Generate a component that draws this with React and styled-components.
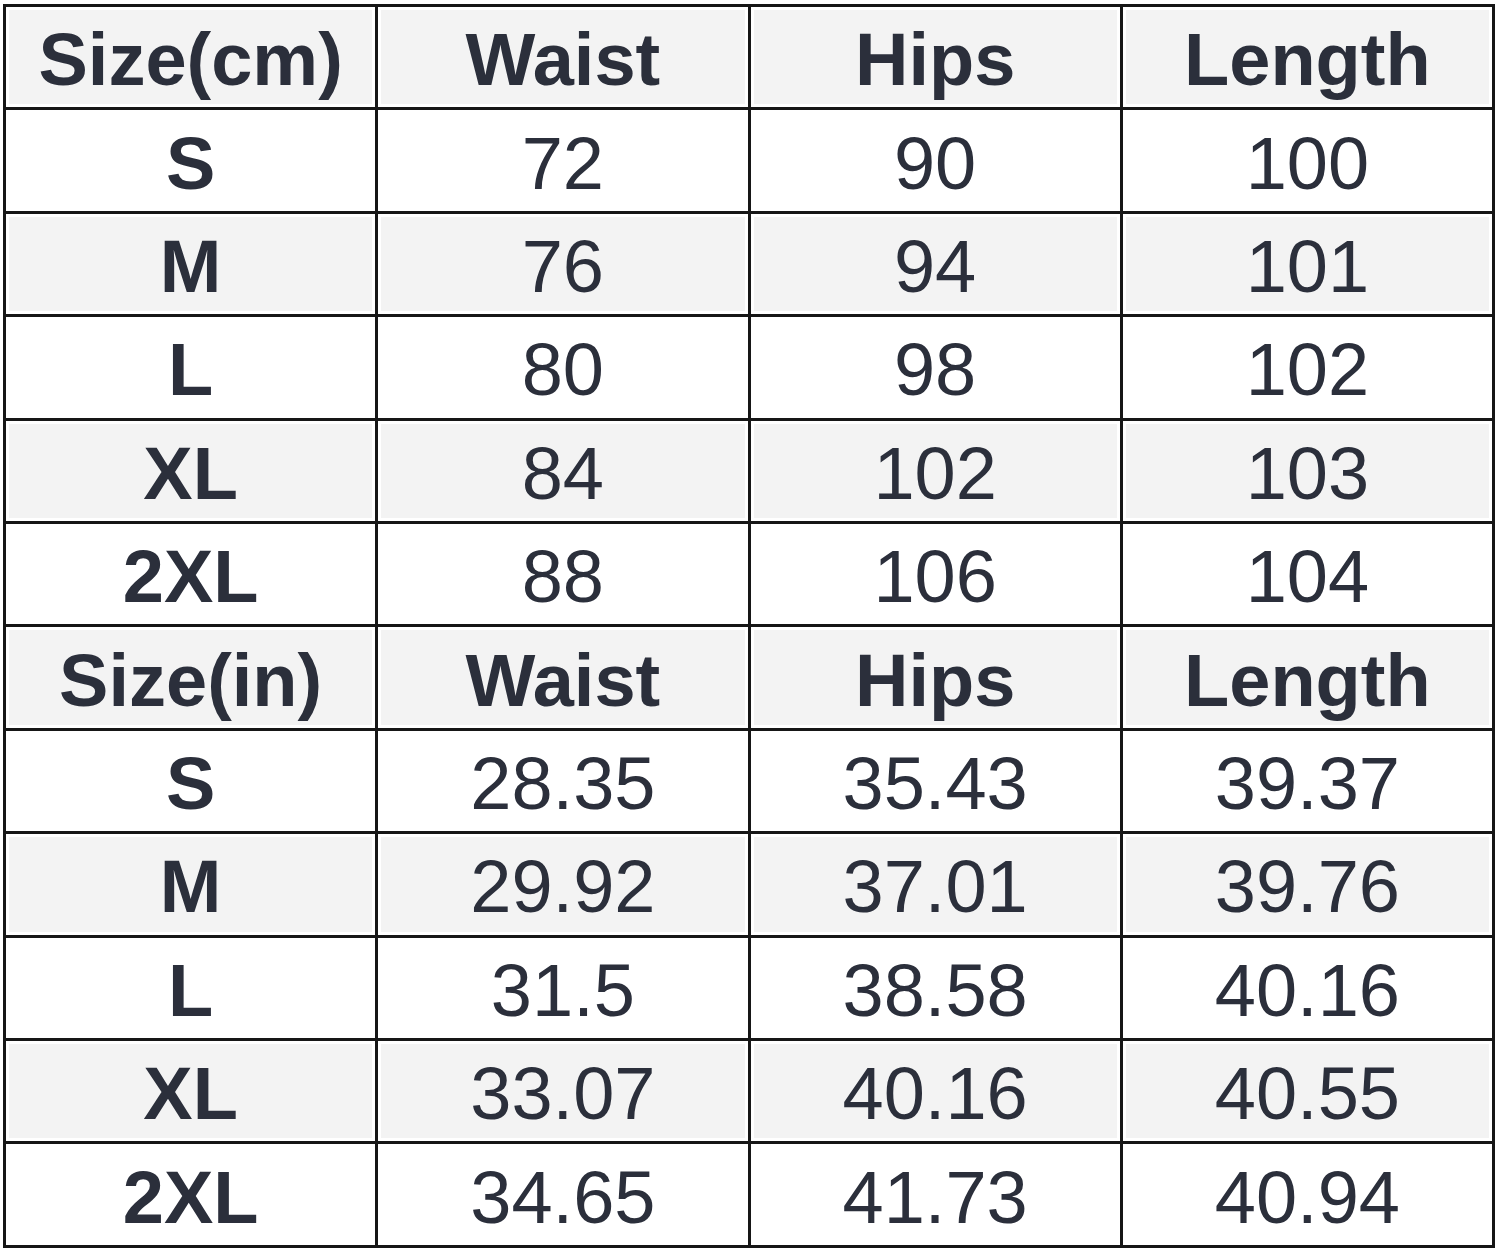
import React from 'react';
import styled, { createGlobalStyle } from 'styled-components';

const GlobalStyle = createGlobalStyle`
  html, body {
    margin: 0;
    padding: 0;
    background: #ffffff;
  }
`;

const Page = styled.div`
  padding: 4px 0 0 3px;
`;

const Table = styled.table`
  width: 1492px;
  height: 1244px;
  border-collapse: collapse;
  table-layout: fixed;
  font-family: "Liberation Sans", Arial, sans-serif;
  color: #2b2f3b;
`;

const Cell = styled.td`
  border: 3px solid #161616;
  text-align: center;
  vertical-align: middle;
  font-size: 74px;
  font-weight: ${p => (p.$bold ? 700 : 400)};
  line-height: 1;
  padding: 6px 0 0 0;
  background: ${p => (p.$shade ? '#f3f3f3' : '#ffffff')};
  box-shadow: ${p => (p.$shade ? 'inset 0 0 0 3px #ffffff' : 'none')};
`;

const cm = [
  ['S', '72', '90', '100'],
  ['M', '76', '94', '101'],
  ['L', '80', '98', '102'],
  ['XL', '84', '102', '103'],
  ['2XL', '88', '106', '104'],
];

const inch = [
  ['S', '28.35', '35.43', '39.37'],
  ['M', '29.92', '37.01', '39.76'],
  ['L', '31.5', '38.58', '40.16'],
  ['XL', '33.07', '40.16', '40.55'],
  ['2XL', '34.65', '41.73', '40.94'],
];

const HeaderRow = ({ label }) => (
  <tr>
    {[label, 'Waist', 'Hips', 'Length'].map(t => (
      <Cell key={t} $bold $shade>{t}</Cell>
    ))}
  </tr>
);

const DataRows = ({ rows }) =>
  rows.map((r, i) => (
    <tr key={r[0]}>
      {r.map((v, j) => (
        <Cell key={j} $bold={j === 0} $shade={i % 2 === 1}>{v}</Cell>
      ))}
    </tr>
  ));

export default function App() {
  return (
    <Page>
      <GlobalStyle />
      <Table>
        <tbody>
          <HeaderRow label="Size(cm)" />
          <DataRows rows={cm} />
          <HeaderRow label="Size(in)" />
          <DataRows rows={inch} />
        </tbody>
      </Table>
    </Page>
  );
}
